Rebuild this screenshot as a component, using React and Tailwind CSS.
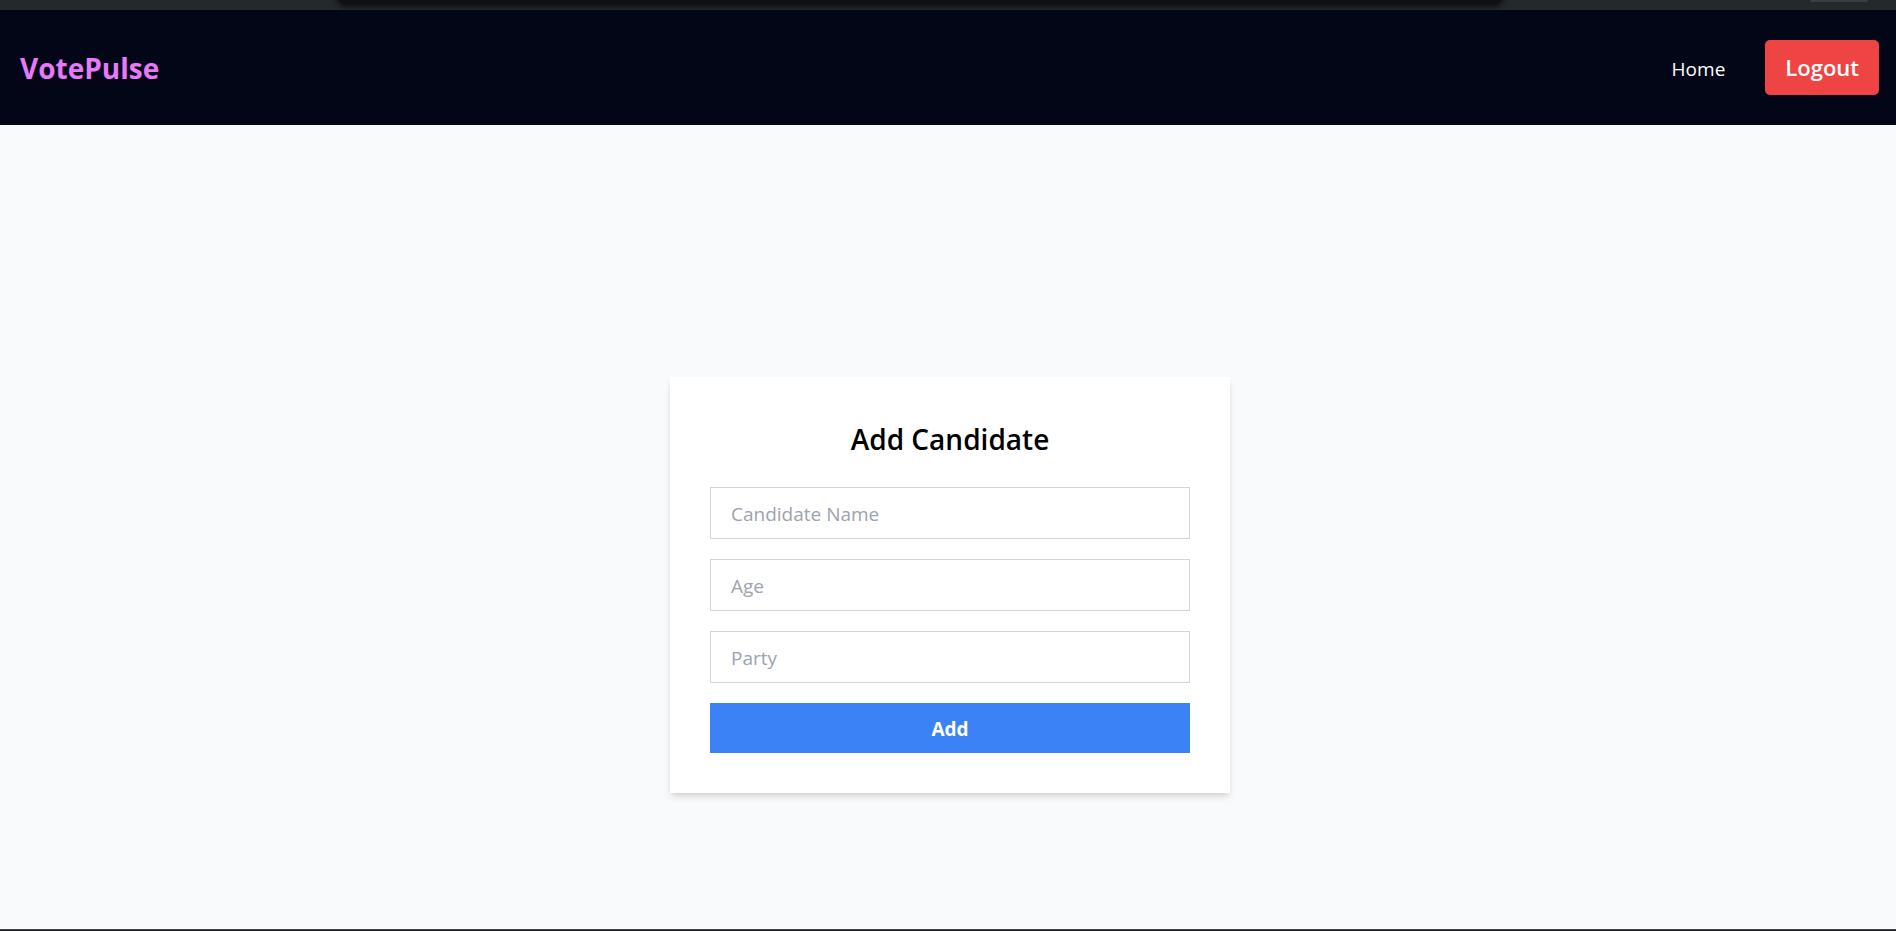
const fields = [
  { id: "name", label: "Candidate Name", type: "text" },
  { id: "age", label: "Age", type: "number" },
  { id: "party", label: "Party", type: "text" },
];

function WindowEdge() {
  return (
    <div className="flex h-[10px] shrink-0 items-start overflow-hidden bg-[#24292c] pr-7 pl-[335px]" aria-hidden="true">
      <div className="-mt-4 h-5 flex-1 rounded-b-xl bg-[#0f1014] shadow-md shadow-black/50" />
      <div className="ml-[305px] h-[2px] w-[58px] rounded-b-sm bg-[#364144]" />
    </div>
  );
}

function NavBar() {
  return (
    <header className="flex h-[115px] shrink-0 items-center justify-between bg-[#020617] pr-[17px] pl-5">
      <a href="#" className="pt-[2px] text-[28px] leading-[45px] font-bold text-[#e879f9]">
        VotePulse
      </a>
      <nav className="flex items-center gap-10 text-white">
        <a href="#" className="pt-[2px] text-[19px] leading-[30px]">
          Home
        </a>
        <button type="button" className="h-[55px] rounded-[5px] bg-[#ef4444] px-5 text-[22px] leading-[35px] font-semibold">
          Logout
        </button>
      </nav>
    </header>
  );
}

function CandidateForm() {
  return (
    <form
      className="w-full max-w-[560px] bg-white p-10 shadow-[0_5px_8px_-1px_rgba(0,0,0,0.1),0_3px_5px_-2px_rgba(0,0,0,0.1)]"
      onSubmit={(e) => e.preventDefault()}
    >
      <h1 className="mb-7 pt-[2px] text-center text-[28px] leading-10 font-semibold text-black">Add Candidate</h1>
      <div className="flex flex-col gap-5">
        {fields.map((field) => (
          <input
            key={field.id}
            id={field.id}
            type={field.type}
            aria-label={field.label}
            placeholder={field.label}
            className="h-[52px] w-full border border-[#d1d5db] px-5 pt-[2px] text-[19px] text-black placeholder:text-[#9ca3af]"
          />
        ))}
        <button type="submit" className="h-[50px] w-full bg-[#3b82f6] pt-[2px] text-[19px] font-bold text-white">
          Add
        </button>
      </div>
    </form>
  );
}

export default function App() {
  return (
    <div className="flex min-h-screen flex-col bg-[#f9fafc] font-['Open_Sans','Noto_Sans',sans-serif]">
      <WindowEdge />
      <NavBar />
      <main className="flex flex-1 items-center justify-center pt-[116px] pl-1">
        <CandidateForm />
      </main>
      <footer className="h-[2px] shrink-0 border-t border-[#47474b] bg-[#1b1b22]" />
    </div>
  );
}
